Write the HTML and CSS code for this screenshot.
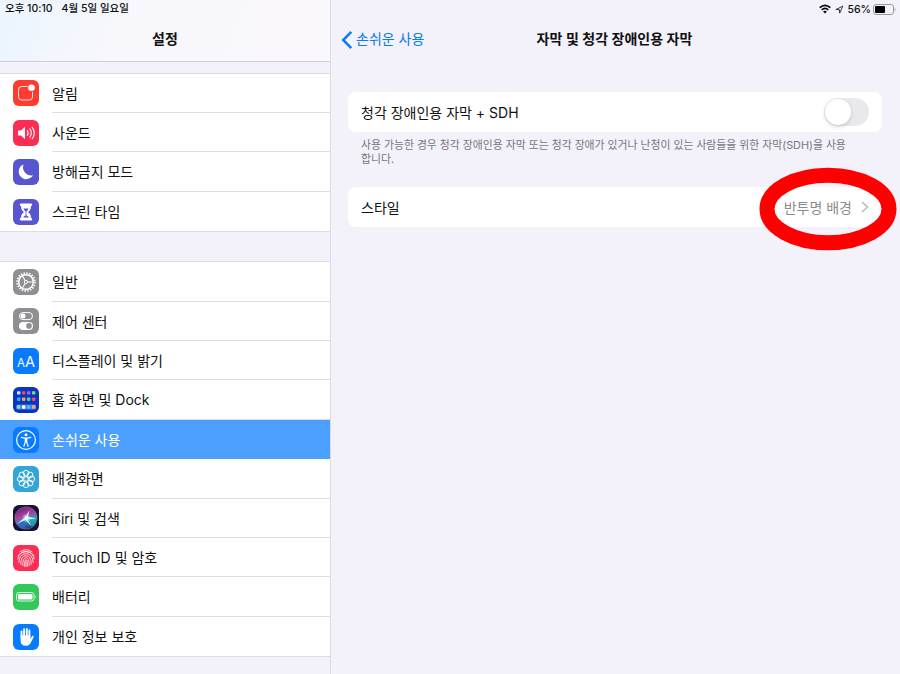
FILE: index.html
```html
<!DOCTYPE html>
<html lang="ko">
<head>
    <meta charset="UTF-8">
    <meta name="viewport" content="width=device-width, initial-scale=1.0">
    <title>설정</title>
    <link rel="stylesheet" href="styles.css">
</head>
<body>
    <div class="screen">
        <aside class="sidebar">
            <header class="sidebar-header">
                <div class="status-left"><span>오후 10:10</span><span>4월 5일 일요일</span></div>
                <h1>설정</h1>
            </header>

            <ul class="menu">
                <li>
                    <svg class="icon red" viewBox="0 0 26 26"><rect x="5.5" y="6.5" width="14" height="13.5" rx="3.2" fill="none" stroke="#fff" stroke-width=".9"/><circle cx="18.5" cy="7.8" r="4.2" fill="#ff3b30"/><circle cx="18.5" cy="7.8" r="3.3" fill="#fff"/></svg>
                    <span>알림</span>
                </li>
                <li>
                    <svg class="icon pink" viewBox="0 0 26 26"><path d="M5 10.5h3l4-3.7v12.4l-4-3.7H5z" fill="#fff"/><path d="M14.3 10.5q1.7 2.5 0 5M16.8 8.8q3 4.2 0 8.4M19.2 7.3q4.3 5.7 0 11.4" fill="none" stroke="#fff" stroke-width="1.1" stroke-linecap="round"/></svg>
                    <span>사운드</span>
                </li>
                <li>
                    <svg class="icon purple" viewBox="0 0 26 26"><path d="M10.5 5.5A7.6 7.6 0 1 0 20 16.2A8.2 8.2 0 0 1 10.5 5.5z" fill="#fff"/></svg>
                    <span>방해금지 모드</span>
                </li>
                <li>
                    <svg class="icon purple" viewBox="0 0 26 26"><path d="M8 4.5h10a1 1 0 0 1 0 2.4c0 3-1 4.5-3 6.1c2 1.6 3 3.1 3 6.1a1 1 0 0 1 0 2.4H8a1 1 0 0 1 0-2.4c0-3 1-4.5 3-6.1c-2-1.6-3-3.1-3-6.1a1 1 0 0 1 0-2.4z" fill="#fff"/><path d="M10.5 9.5h5c-.4 1.300-1.100 2.200-2.100 3v4c1.200.3 2 .9 2.300 1.900h-5.400c.3-1 1.100-1.600 2.300-1.900v-4c-1-.8-1.700-1.700-2.100-3z" fill="#5856ce"/></svg>
                    <span>스크린 타임</span>
                </li>
            </ul>

            <ul class="menu">
                <li>
                    <svg class="icon gray" viewBox="0 0 26 26"><g fill="none" stroke="#fff"><circle cx="13" cy="13" r="8.9" stroke-width="1.8" stroke-dasharray="1.5 1.296"/><circle cx="13" cy="13" r="7.3" stroke-width="1.5"/><path d="M13 13h7M13 13L9.5 7M13 13L9.5 19" stroke-width="1.1"/><circle cx="13" cy="13" r="1.6" fill="#8e8e93" stroke-width="1"/></g></svg>
                    <span>일반</span>
                </li>
                <li>
                    <svg class="icon gray" viewBox="0 0 26 26"><rect x="6.5" y="4.6" width="13" height="7" rx="3.5" fill="none" stroke="#fff"/><circle cx="10" cy="8.1" r="2.5" fill="#fff"/><rect x="6" y="13.9" width="14" height="8" rx="4" fill="#fff"/><circle cx="16" cy="17.9" r="2.8" fill="#8e8e93"/></svg>
                    <span>제어 센터</span>
                </li>
                <li>
                    <div class="icon blue letters"><span class="small-a">A</span><span>A</span></div>
                    <span>디스플레이 및 밝기</span>
                </li>
                <li>
                    <svg class="icon navy" viewBox="0 0 26 26">
                        <rect x="3" y="17.5" width="20" height="5" rx="1.5" fill="#4a7be8"/>
                        <rect x="4" y="4.2" width="3.4" height="3.4" rx=".8" fill="#d8e4ff"/><rect x="9" y="4.2" width="3.4" height="3.4" rx=".8" fill="#ec4b68"/><rect x="14" y="4.2" width="3.4" height="3.4" rx=".8" fill="#b65ae8"/><rect x="19" y="4.2" width="3.4" height="3.4" rx=".8" fill="#85d86c"/>
                        <rect x="4" y="10.5" width="3.4" height="3.4" rx=".8" fill="#35a7f5"/><rect x="9" y="10.5" width="3.4" height="3.4" rx=".8" fill="#f9a33b"/><rect x="14" y="10.5" width="3.4" height="3.4" rx=".8" fill="#52cfa0"/><rect x="19" y="10.5" width="3.4" height="3.4" rx=".8" fill="#f04f62"/>
                        <rect x="4" y="18.3" width="3.4" height="3.4" rx=".8" fill="#7de0b0"/><rect x="9" y="18.3" width="3.4" height="3.4" rx=".8" fill="#fff"/><rect x="14" y="18.3" width="3.4" height="3.4" rx=".8" fill="#43bfff"/><rect x="19" y="18.3" width="3.4" height="3.4" rx=".8" fill="#f6a182"/>
                    </svg>
                    <span>홈 화면 및 Dock</span>
                </li>
                <li class="active">
                    <svg class="icon blue" viewBox="0 0 26 26"><circle cx="13" cy="13" r="9.4" fill="none" stroke="#fff" stroke-width="1.2"/><circle cx="13" cy="7.8" r="1.5" fill="#fff"/><path d="M8.3 10.4l3.4.8h2.6l3.4-.8M12.3 11v4l-1.4 4.3M13.7 11v4l1.4 4.3M13 11v4" fill="none" stroke="#fff" stroke-width="1.2" stroke-linecap="round" stroke-linejoin="round"/></svg>
                    <span>손쉬운 사용</span>
                </li>
                <li>
                    <svg class="icon cyan" viewBox="0 0 26 26"><g fill="none" stroke="#fff" stroke-width="1"><circle cx="13" cy="7.2" r="2.8"/><circle cx="17.1" cy="8.9" r="2.8"/><circle cx="18.8" cy="13" r="2.8"/><circle cx="17.1" cy="17.1" r="2.8"/><circle cx="13" cy="18.8" r="2.8"/><circle cx="8.9" cy="17.1" r="2.8"/><circle cx="7.2" cy="13" r="2.8"/><circle cx="8.9" cy="8.9" r="2.8"/><circle cx="13" cy="13" r="2.3"/></g></svg>
                    <span>배경화면</span>
                </li>
                <li>
                    <svg class="icon siri" viewBox="0 0 26 26">
                        <defs>
                            <linearGradient id="orb" x1="0.3" y1="0" x2="0.7" y2="1"><stop offset="0" stop-color="#6f2378"/><stop offset=".4" stop-color="#b0409a"/><stop offset=".6" stop-color="#2797b5"/><stop offset="1" stop-color="#272a79"/></linearGradient>
                            <radialGradient id="glow"><stop offset="0" stop-color="#fff"/><stop offset=".4" stop-color="#d5f6fa" stop-opacity=".7"/><stop offset="1" stop-color="#5bd6e5" stop-opacity="0"/></radialGradient>
                        </defs>
                        <circle cx="13" cy="13" r="11.2" fill="url(#orb)" stroke="#7b6b9d" stroke-width=".6"/>
                        <path d="M12 14L4 19Q7 24 12 24z" fill="#3b62c0" opacity=".8"/>
                        <path d="M15 13L23.500 11Q24 18 19 22z" fill="#25b5b8" opacity=".7"/>
                        <path d="M4 19Q8 15 12 12.500L16.500 5L14.800 12Q19 12 23 13.500Q18 14 14.800 14.200L18.500 21.500L12.800 15Q8 16.500 4 19z" fill="#d4f6f8"/>
                        <circle cx="13.5" cy="13" r="5" fill="url(#glow)"/>
                    </svg>
                    <span>Siri 및 검색</span>
                </li>
                <li>
                    <svg class="icon pink" viewBox="0 0 26 26"><g fill="none" stroke="#fff" stroke-width=".9" stroke-linecap="round" opacity=".9"><path d="M7 6.8q6-4.500 12 0M5 10.500q8-8.500 16 0M4.800 14q1-7.300 8.200-7.300t8.200 7.300M5.800 17.500q.5-8.800 7.200-8.800t7.200 8.800M7.800 19.500q-.2-8.800 5.200-8.800t5.200 8.800M9.800 20.700q-.2-8 3.200-8t3.200 8M11.600 21.300q-.3-6.600 1.400-6.600t1.400 6.600M13 17v4.500"/></g></svg>
                    <span>Touch ID 및 암호</span>
                </li>
                <li>
                    <svg class="icon green" viewBox="0 0 26 26"><rect x="3.5" y="8.5" width="17.5" height="8.5" rx="2.3" fill="none" stroke="#fff" stroke-width=".8"/><rect x="5" y="10" width="14.5" height="5.5" rx="1" fill="#fff"/><path d="M22 11.2q1.5 1.5 0 3z" fill="#fff"/></svg>
                    <span>배터리</span>
                </li>
                <li>
                    <svg class="icon blue" viewBox="0 0 26 26"><path d="M8.5 13V7.5M11.1 12V5.2M13.8 12V4.9M16.4 13V6.5" fill="none" stroke="#fff" stroke-width="1.9" stroke-linecap="round"/><path d="M7.55 11.5h9.8v3.4l1.5-2.5q.8-1 1.7-.3q.4.4 0 1.2l-2.8 5.400q-1.500 3.100-5 3.100q-5.200 0-5.200-5.800z" fill="#fff"/></svg>
                    <span>개인 정보 보호</span>
                </li>
            </ul>
        </aside>

        <main class="content">
            <div class="status-right">
                <svg class="wifi" viewBox="0 0 12 10"><path d="M.7 3.6q5.3-4.6 10.6 0M2.7 5.9q3.3-2.9 6.6 0" fill="none" stroke="#000" stroke-width="1.6"/><path d="M4.1 7.5q1.9-1.5 3.8 0L6 9.6z"/></svg>
                <svg class="location" viewBox="0 0 10 10"><path d="M1 5L8.7 1.3L5.2 9L4.9 5.2z" fill="none" stroke="#222" stroke-width="1" stroke-linejoin="round"/></svg>
                <span>56%</span>
                <svg class="battery" viewBox="0 0 23 11"><rect x=".5" y=".5" width="20" height="10" rx="2.6" fill="none" stroke="#999"/><rect x="2" y="2" width="10" height="7" rx="1" fill="#000"/><path d="M21.7 3.7q1.7 1.8 0 3.6z" fill="#999"/></svg>
            </div>

            <header class="content-header">
                <a class="back">
                    <svg viewBox="0 0 12 20"><path d="M10.3 1.8L2.2 10l8.1 8.2" fill="none" stroke="#087bf5" stroke-width="2.5"/></svg>
                    <span>손쉬운 사용</span>
                </a>
                <h2>자막 및 청각 장애인용 자막</h2>
            </header>

            <section class="settings">
                <div class="card">
                    <span>청각 장애인용 자막 + SDH</span>
                    <span class="switch"></span>
                </div>
                <p class="note">사용 가능한 경우 청각 장애인용 자막 또는 청각 장애가 있거나 난청이 있는 사람들을 위한 자막(SDH)을 사용<br>합니다.</p>
                <div class="card">
                    <span>스타일</span>
                    <span class="value">반투명 배경
                        <svg viewBox="0 0 8 12"><path d="M1 1l5.5 5L1 11" fill="none" stroke="#b5b5ba" stroke-width="1.4"/></svg>
                    </span>
                    <!-- Красный овал вокруг значения -->
                    <svg class="mark" viewBox="0 0 138 84"><ellipse cx="69" cy="42" rx="61" ry="33.7" fill="none" stroke="#fe0000" stroke-width="15"/></svg>
                </div>
            </section>
        </main>
    </div>
</body>
</html>
```
FILE: styles.css
```css
/* Общие стили */
* {
    box-sizing: border-box;
}

body {
    margin: 0;
    background-color: #f3f1fa;
    font-family: Inter, "Noto Sans CJK KR", sans-serif;
    font-size: 14px;
    color: #111;
}

h1, h2, p, ul {
    margin: 0;
    padding: 0;
}

.screen {
    display: flex;
    width: 900px;
    height: 674px;
    overflow: hidden;
}

/* Боковая панель */
.sidebar {
    width: 331px;
    flex-shrink: 0;
    border-right: 1px solid #dcdbe2;
}

.sidebar-header {
    height: 62px;
    margin-bottom: 10.6px;
    border-bottom: 1px solid #cfced6;
    background: linear-gradient(110deg, #eaf5fd 0, #f8f7fc 38%, #faf8fc 100%);
}

.status-left {
    display: flex;
    gap: 9px;
    height: 18px;
    padding-left: 5px;
    font-size: 10.5px;
    font-weight: 500;
    line-height: 18px;
}

.sidebar-header h1 {
    font-size: 14px;
    font-weight: 600;
    line-height: 42px;
    text-align: center;
}

.menu {
    list-style: none;
    margin-bottom: 29px;
    border-top: 1px solid #dddce2;
    border-bottom: 1px solid #dddce2;
    background-color: #fff;
}

.menu li {
    display: flex;
    align-items: center;
    height: 39.42px;
    padding-left: 13px;
}

.menu li > span {
    flex: 1;
    height: 100%;
    margin-left: 13px;
    border-bottom: 1px solid #dedee2;
    line-height: 39px;
    white-space: nowrap;
}

.menu li:last-child > span {
    border-bottom: none;
}

.menu .active {
    background-color: #4ba0ff;
    color: #fff;
}

.menu .active > span {
    border-color: #4ba0ff;
}

.icon {
    width: 26px;
    height: 26px;
    border-radius: 6px;
}

.red { background-color: #ff3b30; }
.pink { background-color: #fc2d55; }
.purple { background-color: #5856ce; }
.gray { background-color: #8e8e93; }
.blue { background-color: #087bff; }
.navy { background-color: #0a35bd; }
.cyan { background-color: #32a5d9; }
.siri { background-color: #171332; }
.green { background-color: #34c759; }

.letters {
    display: flex;
    justify-content: center;
    align-items: baseline;
    color: #fff;
    font-size: 14.5px;
    line-height: 27px;
}

.small-a {
    font-size: 11.5px;
}

/* Правая часть */
.content {
    flex: 1;
}

.status-right {
    display: flex;
    justify-content: flex-end;
    align-items: center;
    height: 18px;
    padding-right: 4px;
    font-size: 10.5px;
    font-weight: 500;
}

.wifi {
    width: 12px;
    height: 10px;
    margin-right: 4px;
}

.location {
    width: 9px;
    height: 9px;
    margin-right: 3px;
}

.battery {
    width: 23px;
    height: 11px;
    margin-left: 2px;
}

.content-header {
    display: grid;
    grid-template-columns: 1fr auto 1fr;
    align-items: center;
    height: 43px;
    padding-left: 10px;
    padding-right: 12px;
}

.back {
    display: flex;
    align-items: center;
    gap: 3px;
    color: #087bf5;
}

.back svg {
    width: 12px;
    height: 20px;
}

.back span,
.content-header h2 {
    margin-top: -3px;
}

.content-header h2 {
    font-size: 14px;
    font-weight: 600;
}

.settings {
    padding: 31px 18px 0 17px;
}

.card {
    position: relative;
    display: flex;
    justify-content: space-between;
    align-items: center;
    height: 40px;
    padding: 0 13px;
    border-radius: 8px;
    background-color: #fff;
}

.card > span {
    margin-top: -1px;
}

.switch {
    width: 45px;
    height: 28px;
    padding: 1px;
    border-radius: 14px;
    background-color: #e9e9eb;
}

.switch::before {
    content: "";
    display: block;
    width: 26px;
    height: 26px;
    border-radius: 50%;
    background-color: #fff;
    box-shadow: 0 2px 4px rgba(0, 0, 0, 0.15);
}

.note {
    height: 55px;
    padding: 7px 13px 0;
    color: #77767d;
    font-size: 10.83px;
    line-height: 14px;
    white-space: nowrap;
}

.value {
    display: flex;
    align-items: center;
    gap: 9px;
    color: #8b8b90;
}

.value svg {
    width: 8px;
    height: 12px;
}

.mark {
    position: absolute;
    top: -20px;
    right: -15px;
    width: 138px;
    height: 84px;
}
```
